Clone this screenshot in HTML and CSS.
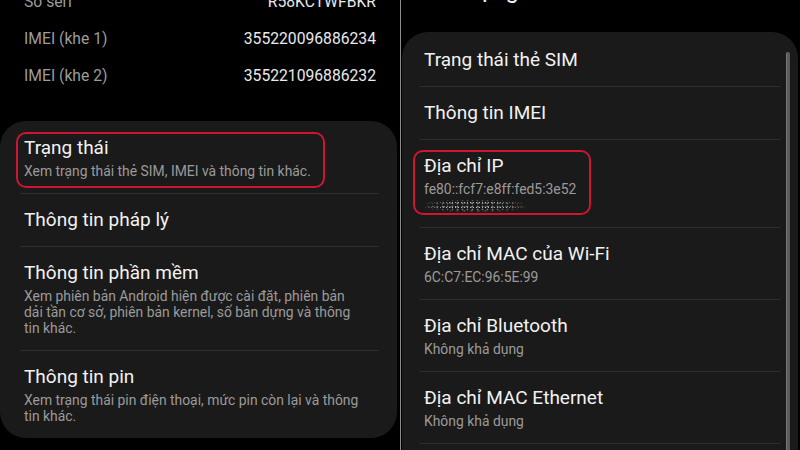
FILE: index.html
```html
<!DOCTYPE html>
<html lang="vi">
<head>
<meta charset="utf-8">
<title>Trạng thái</title>
<link rel="stylesheet" href="styles.css">
</head>
<body>
<div class="screen">
  <section class="panel panel-left">
    <div class="info-list">
      <div class="info-row"><span class="info-label">Số sêri</span><span class="info-value">R58KCTWFBKR</span></div>
      <div class="info-row"><span class="info-label">IMEI (khe 1)</span><span class="info-value">355220096886234</span></div>
      <div class="info-row"><span class="info-label">IMEI (khe 2)</span><span class="info-value">355221096886232</span></div>
    </div>
    <div class="card card-left">
      <div class="item item-first">
        <div class="hl hl-left">
          <div class="title">Trạng thái</div>
          <div class="sub">Xem trạng thái thẻ SIM, IMEI và thông tin khác.</div>
        </div>
      </div>
      <div class="item">
        <div class="title">Thông tin pháp lý</div>
      </div>
      <div class="item">
        <div class="title">Thông tin phần mềm</div>
        <div class="sub">Xem phiên bản Android hiện được cài đặt, phiên bản<br>dải tần cơ sở, phiên bản kernel, số bản dựng và thông<br>tin khác.</div>
      </div>
      <div class="item">
        <div class="title">Thông tin pin</div>
        <div class="sub">Xem trạng thái pin điện thoại, mức pin còn lại và thông<br>tin khác.</div>
      </div>
    </div>
  </section>
  <section class="panel panel-right">
    <header class="topbar">
      <svg class="back" width="16" height="16" viewBox="0 0 16 16"><path d="M14 8H2M7 3L2 8l5 5" fill="none" stroke="#f0f0f0" stroke-width="1.8" stroke-linecap="round" stroke-linejoin="round"/></svg>
      <span class="topbar-title">Trạng thái</span>
    </header>
    <div class="card card-right">
      <div class="scrollbar"></div>
      <div class="item item-first">
        <div class="title">Trạng thái thẻ SIM</div>
      </div>
      <div class="item">
        <div class="title">Thông tin IMEI</div>
      </div>
      <div class="item">
        <div class="hl hl-right">
          <div class="title">Địa chỉ IP</div>
          <div class="sub">fe80::fcf7:e8ff:fed5:3e52</div>
          <div class="sub"><span class="redact"></span></div>
        </div>
      </div>
      <div class="item">
        <div class="title">Địa chỉ MAC của Wi-Fi</div>
        <div class="sub">6C:C7:EC:96:5E:99</div>
      </div>
      <div class="item">
        <div class="title">Địa chỉ Bluetooth</div>
        <div class="sub">Không khả dụng</div>
      </div>
      <div class="item">
        <div class="title">Địa chỉ MAC Ethernet</div>
        <div class="sub">Không khả dụng</div>
      </div>
      <div class="item">
        <div class="title">Thời gian hoạt động</div>
        <div class="sub">00:00:00</div>
      </div>
    </div>
  </section>
</div>
</body>
</html>
```
FILE: styles.css
```css
* { box-sizing: border-box; }
html, body { margin: 0; padding: 0; background: #000; }
body {
  width: 800px;
  height: 450px;
  overflow: hidden;
  font-family: Roboto, "Noto Sans", "Liberation Sans", sans-serif;
  color: #f0f0f0;
}
.screen {
  display: flex;
  width: 800px;
  height: 450px;
  overflow: hidden;
}
.panel {
  height: 450px;
  overflow: hidden;
  background: #000;
}
.panel-left {
  width: 401px;
  padding-right: 3px;
  border-right: 1px solid #8c8c8c;
}
.panel-right {
  width: 399px;
  padding-left: 1px;
  padding-right: 2px;
}

/* top info rows on the left */
.info-list {
  margin-top: -17px;
  padding: 0 21px 0 24px;
}
.info-row {
  display: flex;
  justify-content: space-between;
  align-items: center;
  height: 37px;
  font-size: 15.7px;
}
.info-label { color: #9c9c9c; }
.info-value { color: #e9e9e9; }

/* cards */
.card {
  background: #1a1a1a;
  border-radius: 26px;
  position: relative;
}
.card-left {
  margin-top: 27px;
  padding: 0 18px 0 20px;
}
.card-right {
  margin-top: 26px;
  padding: 0 17px;
  height: 500px;
}
.item {
  border-top: 1px solid #2e2e2e;
  padding: 14px 6px 14px 4px;
}
.card-right .item { padding-left: 5px; }
.item-first { border-top: none; padding-top: 15px; }
.card-right .item-first { padding-top: 16px; }

.title {
  font-size: 19px;
  line-height: 24px;
  color: #f2f2f2;
}
.sub {
  font-size: 13.9px;
  line-height: 16px;
  color: #9a9a9a;
  margin-top: 3px;
}
.sub + .sub { margin-top: 0; }

/* red highlight annotations */
.hl {
  width: fit-content;
  border: 2px solid #cf1631;
  border-radius: 10px;
}
.hl-left {
  margin: -4px -14px -9px -8px;
  padding: 2px 12px 7px 6px;
}
.hl-right {
  margin: -4px -15px -2px -11px;
  padding: 2px 13px 0 9px;
}

/* pixelated redaction */
.redact {
  display: inline-block;
  vertical-align: middle;
  width: 101px;
  height: 12px;
  opacity: 0.85;
  background-image:
    radial-gradient(circle, #d0d0d0 0.6px, transparent 1px),
    radial-gradient(circle, #9a9a9a 0.7px, transparent 1.1px),
    radial-gradient(circle, #6a6a6a 0.9px, transparent 1.3px),
    radial-gradient(circle, #b8b8b8 0.5px, transparent 0.9px);
  background-size: 3px 5px, 5px 3px, 7px 4px, 11px 7px;
  background-position: 0 0, 1px 2px, 2px 1px, 4px 3px;
  -webkit-mask-image: radial-gradient(ellipse 55% 60% at 50% 50%, #000 55%, transparent 100%);
  mask-image: radial-gradient(ellipse 55% 60% at 50% 50%, #000 55%, transparent 100%);
}

/* scrollbar overlay */
.scrollbar {
  position: absolute;
  right: 8px;
  top: 20px;
  width: 4px;
  height: 460px;
  background: #5c5c5c;
  border-left: 1px solid #777;
  border-radius: 2px;
}

/* right header (mostly cut off) */
.topbar {
  display: flex;
  align-items: center;
  gap: 14px;
  height: 32px;
  margin-top: -26px;
  padding-left: 26px;
}
.back { display: block; }
.topbar-title {
  font-size: 24px;
  line-height: 32px;
  color: #f2f2f2;
}
```
